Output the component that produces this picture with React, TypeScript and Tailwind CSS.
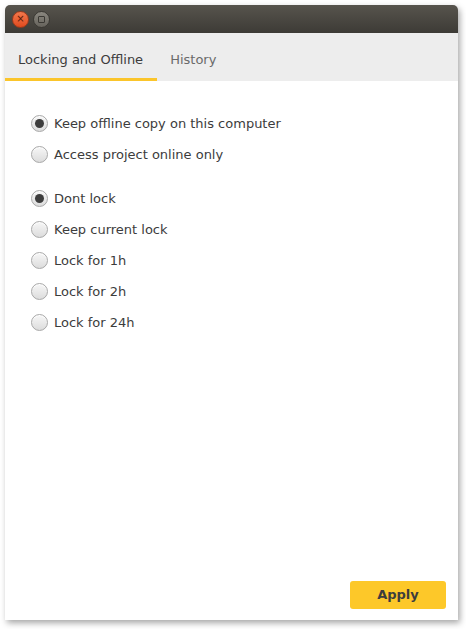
import React, { useState } from 'react';

const font = { fontFamily: '"DejaVu Sans", "Liberation Sans", sans-serif' };

function Radio({ label, checked, onClick }: { label: string; checked: boolean; onClick: () => void }) {
  return (
    <button onClick={onClick} className="flex h-[31px] items-center gap-[6px] text-left text-[13px] text-[#3c3c3c]">
      <span className="flex h-[17px] w-[17px] items-center justify-center rounded-full border border-[#a8a8a8] bg-gradient-to-b from-[#f7f7f7] to-[#dcdcdc] shadow-[inset_0_1px_0_#fff]">
        {checked && <span className="h-[9px] w-[9px] rounded-full bg-[#3d3d3d]" />}
      </span>
      <span>{label}</span>
    </button>
  );
}

export default function App() {
  const [mode, setMode] = useState('offline');
  const [lock, setLock] = useState('none');
  const [tab, setTab] = useState(0);

  return (
    <div className="h-[629px] w-[466px] bg-white pl-[5px] pt-[5px]" style={font}>
      <div className="flex h-[615px] w-[453px] flex-col overflow-hidden rounded-t-[5px] bg-white shadow-[2px_3px_6px_rgba(0,0,0,0.35)]">
        <div className="flex h-[28px] items-center gap-[4px] bg-gradient-to-b from-[#57544d] to-[#3d3b36] pl-[7px]">
          <span className="flex h-[17px] w-[17px] items-center justify-center rounded-full border border-[#9c3a1c] bg-gradient-to-b from-[#f3784c] to-[#df4a1d] text-[10px] leading-none text-[#5a1a08]">
            ×
          </span>
          <span className="flex h-[17px] w-[17px] items-center justify-center rounded-full border border-[#3a3833] bg-gradient-to-b from-[#8a877f] to-[#66635c]">
            <span className="h-[7px] w-[7px] rounded-[1px] border border-[#3a3833]" />
          </span>
        </div>
        <div className="flex h-[48px] items-stretch bg-[#ededed] text-[13px]">
          {['Locking and Offline', 'History'].map((t, i) => (
            <button
              key={t}
              onClick={() => setTab(i)}
              className={`flex items-center border-b-[3px] pl-[13px] pr-[14px] pt-[9px] ${
                tab === i ? 'border-[#fbc52b] text-[#3c3c3c]' : 'border-transparent text-[#6a6a6a]'
              }`}
            >
              {t}
            </button>
          ))}
        </div>
        <div className="flex flex-1 flex-col pl-[26px] pt-[27px]">
          <Radio label="Keep offline copy on this computer" checked={mode === 'offline'} onClick={() => setMode('offline')} />
          <Radio label="Access project online only" checked={mode === 'online'} onClick={() => setMode('online')} />
          <div className="h-[13px]" />
          {[
            ['none', 'Dont lock'],
            ['keep', 'Keep current lock'],
            ['1h', 'Lock for 1h'],
            ['2h', 'Lock for 2h'],
            ['24h', 'Lock for 24h'],
          ].map(([k, l]) => (
            <Radio key={k} label={l} checked={lock === k} onClick={() => setLock(k)} />
          ))}
        </div>
        <div className="flex justify-end pb-[11px] pr-[12px]">
          <button className="h-[28px] w-[96px] rounded-[3px] bg-[#fdc829] text-[13px] font-bold text-[#3d3d3d]">Apply</button>
        </div>
      </div>
    </div>
  );
}
